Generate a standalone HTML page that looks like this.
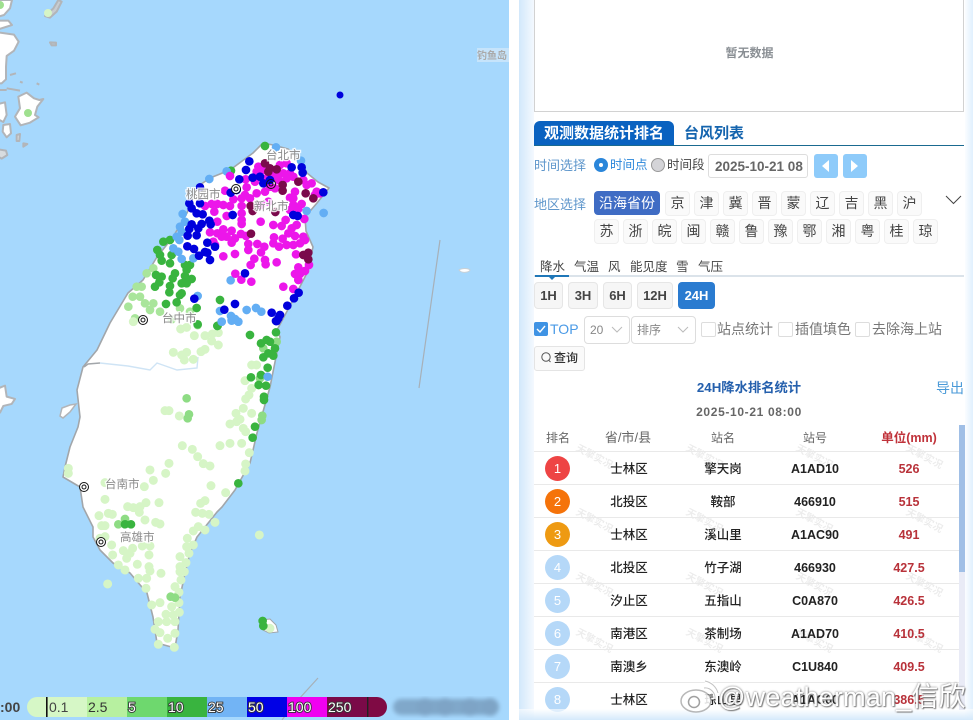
<!DOCTYPE html>
<html lang="zh"><head><meta charset="utf-8"><title>观测数据统计排名</title>
<style>
html,body{margin:0;padding:0;width:973px;height:720px;overflow:hidden;background:#fff}
body{position:relative;font-family:"Liberation Sans","Noto Sans CJK SC",sans-serif;color:#333}
.a{position:absolute;white-space:nowrap}
.c{text-align:center}
.chip{position:absolute;width:23px;height:23px;line-height:23px;text-align:center;font-size:14px;color:#444;background:#fafafa;border:1px solid #efefef;border-radius:4px}
.h{position:absolute;top:282px;height:25px;line-height:25px;text-align:center;font-size:13px;font-weight:700;color:#444;background:#f6f6f6;border:1px solid #e6e6e6;border-radius:4px}
.cb{position:absolute;top:322px;width:13px;height:13px;border:1px solid #ddd;border-radius:2px;background:#fff}
.lb{position:absolute;top:320px;font-size:14px;line-height:18px;color:#777;white-space:nowrap}
.sel{position:absolute;top:316px;height:26px;line-height:26px;border:1px solid #ddd;border-radius:4px;font-size:12px;color:#888;background:#fff;padding-left:5px;box-sizing:content-box}
.th{position:absolute;top:430px;font-size:12px;line-height:16px;color:#666;text-align:center;white-space:nowrap}
.line{position:absolute;left:534px;width:425px;height:1px;background:#e9e9e9}
.t{position:absolute;width:100px;line-height:18px;text-align:center;font-size:12.5px;color:#222;font-weight:500;white-space:nowrap;margin-top:1px}
.v{color:#b8323a;font-weight:700}
.n{font-weight:700}
.r{position:absolute;left:545px;width:25px;height:25px;line-height:25px;border-radius:50%;text-align:center;color:#fff;font-size:13px;background:#b5d8f8}
.w{position:absolute;font-size:10px;color:#000;opacity:.07;transform:rotate(28deg);white-space:nowrap;font-weight:700}
</style></head><body>

<svg class="a" style="left:0;top:0" width="509" height="720" viewBox="0 0 509 720">
<defs><filter id="bl"><feGaussianBlur stdDeviation="2.2"/></filter></defs>
<rect width="509" height="720" fill="#a6d8fd"/>
<!-- NW islands -->
<g transform="scale(.3333)" fill="#fff" stroke="#b2b5b9" stroke-width="6" stroke-linejoin="round">
<path d="M-5 0H36L30 25 12 45-5 50Z"/>
<path d="M-5 62H25L36 75-5 88Z"/>
<path d="M-5 97 42 104 56 125 42 152 20 168 18 200 18 238 5 250-5 250Z"/>
<path d="M55 290 80 278 102 295 118 300 130 297 112 320 105 345 116 352 90 368 62 376 45 350 60 325Z"/>
<path d="M-5 312 15 307 20 345 10 366-5 358Z"/>
<path d="M10 375 30 372 33 400 20 412 8 395Z"/>
<path d="M-5 448 18 452 22 465 5 476-5 470Z" fill="#d8dcdf"/>
<path d="M50 405 60 402 58 423 50 423Z" fill="#d8dcdf"/>
<path d="M150 127 168 128 168 136 155 136Z" fill="#b5c2cc"/>
<path d="M160 25 175 0 185 5 170 35 150 53 135 48Z" fill="#c8ccd0"/>
<path d="M-5 1165 15 1157 20 1190 45 1197 35 1212 10 1218 0 1238-5 1238Z"/>
<path d="M70 430 82 432 70 440Z" fill="#c8ccd0"/>
<path d="M30 225 48 220M110 250l8 4M60 245l8 3M20 265 60 272M0 270h20" fill="none"/>
</g>
<!-- Taiwan -->
<path d="M263 143 273 145 288 149 300 160 307 173 318 182 329 188 317 203 305 217 306 231 313 247 307 273 293 300 277 330 280 337 270 387 257 433 250 463 235 490 222 507 217 512 197 537 190 553 185 573 180 597 178 630 175 648 157 643 153 617 147 593 130 573 113 563 100 550 93 537 93 527 83 507 80 487 63 477 65 467 70 447 78 427 80 417 77 390 83 367 97 350 110 323 128 293 143 280 157 257 173 237 187 213 197 187 210 178 230 170 253 153Z" fill="#fff" stroke="#a2a6aa" stroke-width="1.6" stroke-linejoin="round"/>
<path d="M100 363 128 366 150 370 157 363 177 370 197 368 198 357" fill="none" stroke="#cfe4f5" stroke-width="1.4"/>
<path d="M84 367 88 364 100 363" fill="none" stroke="#a2a6aa" stroke-width="1.5"/>
<path d="M60 416 62 408 70 405 76 404 70 412 63 418Z" fill="#fff" stroke="#b2b5b9" stroke-width="1.5"/>
<path d="M459 270c3-2 9-2 11 0 0 2-8 4-11 0Z" fill="#fff" stroke="#c8d0d6"/>
<path d="M261 620l9-1 6 6 2 7-9 1-6-3Z" fill="#fff" stroke="#a2a6aa"/>
<path d="M440 240 419 388" stroke="#a7b0b8" stroke-width="1.2"/>
<path d="M318 678 298 700M288 712 282 720" stroke="#a7b0b8" stroke-width="1.2"/>
<rect x="477" y="48" width="32" height="14" fill="#c6e4fb"/>
<text x="477" y="59" font-size="10" font-weight="700" fill="#aaa">钓鱼岛</text>
<g fill="none" stroke-linecap="round" stroke-width="26">
<g transform="translate(130 130) scale(.3333)">
<path stroke="#a9e59b" d="M20 470h0M50 430h0M70 415h0M35 470h0M8 500h0M30 500h0M45 520h0M70 520h0M150 535h0M180 545h0M15 565h0M125 568h0M60 540h0M90 545h0M-5 530h0"/>
</g>
<g transform="translate(50 320) scale(.3333)">
<path stroke="#d6f5c6" stroke-width="27" d="M250 5h0M392 27h0M410 22h0M433 47h0M465 47h0M487 42h0M505 38h0M485 63h0M505 75h0M465 88h0M453 95h0M370 97h0M410 97h0M395 105h0M403 120h0M430 118h0M605 135h0M620 135h0M585 182h0M605 205h0M597 225h0M587 237h0M580 265h0M558 280h0M605 280h0M570 298h0M540 312h0M560 305h0M580 325h0M587 335h0M345 272h0M357 272h0M388 288h0M397 377h0M427 388h0M443 410h0M460 431h0M480 438h0M510 377h0M540 370h0M575 370h0M598 398h0M587 432h0M585 453h0M357 430h0M300 450h0M347 460h0M310 481h0M283 500h0M165 488h0M55 445h0M55 460h0M483 497h0M527 518h0M165 538h0M233 560h0M250 563h0M270 560h0M288 548h0M327 548h0M268 577h0M147 587h0M175 580h0M187 583h0M285 600h0M317 607h0M330 612h0M155 617h0M165 617h0M452 550h0M465 542h0M437 577h0M457 580h0M477 583h0M495 607h0M445 620h0M430 633h0M465 630h0M412 655h0M430 675h0M410 680h0M417 700h0M390 710h0M408 728h0M390 740h0M403 755h0M390 755h0M393 780h0M375 800h0M387 817h0M387 848h0M365 860h0M388 877h0M330 848h0M305 855h0M348 883h0M370 885h0M325 905h0M350 905h0M375 905h0M315 928h0M330 938h0M375 940h0M353 955h0M325 973h0M373 982h0M165 650h0M150 655h0M185 675h0M188 705h0M220 692h0M248 685h0M240 700h0M230 715h0M277 678h0M300 678h0M297 705h0M205 735h0M225 750h0M262 733h0M297 740h0M300 753h0M265 775h0M290 775h0M333 760h0M288 805h0M173 792h0M660 925h0M628 645h0"/>
<path stroke="#8edc84" d="M443 15h0M680 65h0M640 85h0M637 287h0M635 300h0M410 235h0M417 283h0M413 295h0M630 175h0M225 597h0M205 613h0M362 830h0M375 833h0"/>
<path stroke="#39b43f" d="M503 17h0M600 45h0M678 37h0M633 70h0M650 60h0M660 65h0M675 85h0M640 112h0M655 100h0M670 107h0M653 143h0M603 172h0M633 165h0M648 197h0M626 195h0M642 230h0M642 240h0M615 320h0M608 353h0M565 490h0M225 613h0M243 613h0M640 918h0M638 903h0"/>
<path stroke="#63aef4" d="M515 5h0M545 2h0M565 5h0M653 170h0"/>
<path stroke="#0000dc" d="M680 3h0"/>
</g>
<path stroke="#d6f5c6" stroke-width="8" d="M48 13h0"/>
<path stroke="#9fe08f" stroke-width="8" d="M28 113h0M0 5h0"/>
<path stroke="#0000dc" stroke-width="7" d="M340 95h0"/>
<g transform="translate(130 130) scale(.3333)">
<path stroke="#39b43f" d="M405 48h0M303 122h0M100 335h0M120 330h0M82 360h0M90 375h0M125 375h0M95 392h0M120 400h0M165 405h0M180 405h0M170 420h0M165 438h0M78 435h0M95 440h0M135 430h0M128 445h0M185 447h0M88 457h0M75 470h0M155 460h0M170 460h0M120 468h0M118 487h0M155 490h0M150 495h0M140 517h0M108 522h0M200 534h0M270 510h0M262 588h0M203 583h0"/>
<path stroke="#63aef4" d="M238 147h0M290 124h0M513 92h0M438 52h0M158 252h0M165 275h0M150 290h0M155 305h0M140 320h0M148 330h0M130 355h0M145 365h0M155 387h0M190 385h0M530 243h0M581 249h0M302 451h0M203 498h0M270 543h0M350 540h0M378 534h0M394 545h0M303 558h0M315 567h0M325 575h0M275 575h0M305 570h0"/>
<path stroke="#ec16ea" d="M300 138h0M385 110h0M380 125h0M450 105h0M470 100h0M440 135h0M460 130h0M480 130h0M445 150h0M470 145h0M490 140h0M410 145h0M420 170h0M405 185h0M435 175h0M347 148h0M375 155h0M350 172h0M285 182h0M345 195h0M380 190h0M360 205h0M335 205h0M310 208h0M300 228h0M280 225h0M262 222h0M245 222h0M225 228h0M253 245h0M290 258h0M262 275h0M335 228h0M335 250h0M335 270h0M335 282h0M392 275h0M430 285h0M455 288h0M467 270h0M500 285h0M485 295h0M475 310h0M495 318h0M520 320h0M525 330h0M510 340h0M490 345h0M470 345h0M447 350h0M430 340h0M432 322h0M458 326h0M240 307h0M280 298h0M262 310h0M275 320h0M290 320h0M305 302h0M315 325h0M305 338h0M333 312h0M348 318h0M355 342h0M382 342h0M403 350h0M393 367h0M373 386h0M405 390h0M407 403h0M362 405h0M440 397h0M280 379h0M315 372h0M355 360h0M250 335h0M255 345h0M498 373h0M537 405h0M505 412h0M525 423h0M495 432h0M510 432h0M505 450h0M316 431h0M334 449h0M364 455h0M460 470h0M490 477h0M400 120h0M420 130h0M490 205h0M515 222h0M490 225h0M505 237h0M523 267h0M545 160h0M520 150h0M530 165h0M560 185h0M570 190h0M495 185h0M480 203h0M415 215h0M393 225h0M480 240h0M555 195h0"/>
<path stroke="#0000dc" d="M358 94h0M348 120h0M328 148h0M368 143h0M390 140h0M400 160h0M420 150h0M485 112h0M515 112h0M518 128h0M320 180h0M302 188h0M210 172h0M178 220h0M210 220h0M185 235h0M200 250h0M218 253h0M238 272h0M242 283h0M215 282h0M185 283h0M178 297h0M205 295h0M173 317h0M200 316h0M232 338h0M255 350h0M172 349h0M192 357h0M207 377h0M225 366h0M232 368h0M240 390h0M308 255h0M490 255h0M503 258h0M580 187h0M345 430h0M193 506h0M315 522h0M283 539h0M425 548h0M450 555h0M445 565h0M438 573h0M472 527h0M492 505h0M506 488h0"/>
<path stroke="#7a0a4c" d="M405 100h0M420 115h0M440 118h0M415 125h0M458 165h0M458 182h0M505 155h0M527 190h0M550 205h0M362 228h0M368 243h0M436 246h0M363 311h0M520 375h0M535 368h0M535 388h0"/>
</g>
</g>
<!-- city markers -->
<g fill="#fff" stroke="#111" stroke-width="1">
<g><circle cx="143" cy="320" r="4.5"/><circle cx="143" cy="320" r="2"/></g>
<g><circle cx="84" cy="487" r="4.5"/><circle cx="84" cy="487" r="2"/></g>
<g><circle cx="101" cy="542" r="4.5"/><circle cx="101" cy="542" r="2"/></g>
<g><circle cx="236" cy="189" r="4.5"/><circle cx="236" cy="189" r="2"/></g>
<g><circle cx="271" cy="184" r="4.5" fill="none"/><circle cx="271" cy="184" r="2" fill="none"/></g>
</g>
<g font-size="11.5" fill="#8a8a8a" stroke="#fff" stroke-width="2.5" paint-order="stroke" stroke-opacity=".85">
<text x="266" y="159">台北市</text><text x="186" y="198">桃园市</text><text x="254" y="210">新北市</text><text x="162" y="322">台中市</text><text x="105" y="488">台南市</text><text x="120" y="541">高雄市</text>
</g>
<!-- legend -->
<path d="M37 697H87V717H37a10 10 0 0 1 0-20Z" fill="#d6f7c6"/>
<rect x="87" y="697" width="40" height="20" fill="#b7f0a0"/>
<rect x="127" y="697" width="40" height="20" fill="#6ed86e"/>
<rect x="167" y="697" width="40" height="20" fill="#39b43f"/>
<rect x="207" y="697" width="40" height="20" fill="#72b4f5"/>
<rect x="247" y="697" width="40" height="20" fill="#0000e6"/>
<rect x="287" y="697" width="40" height="20" fill="#f000f0"/>
<rect x="327" y="697" width="40" height="20" fill="#7a0a48"/>
<path d="M367 697H377a10 10 0 0 1 0 20H367Z" fill="#7f0a44"/>
<rect x="46" y="697" width="1.6" height="20" fill="#111"/>
<rect x="367" y="697" width="1.4" height="20" fill="#222"/>
<g filter="url(#bl)"><rect x="393" y="699" width="106" height="16" rx="8" fill="#80a8ca"/><circle cx="425" cy="707" r="9" fill="#7ea4c6"/><circle cx="445" cy="707" r="9" fill="#7ea4c6"/><circle cx="470" cy="707" r="9" fill="#7ea4c6"/><circle cx="490" cy="707" r="9" fill="#7ea4c6"/></g>
<g font-size="14" font-family="Liberation Sans">
<text x="49" y="712" fill="#444">0.1</text><text x="88" y="712" fill="#333">2.5</text>
<g fill="#fff" stroke="#333" stroke-width="1.8" paint-order="stroke"><text x="128" y="712">5</text><text x="168" y="712">10</text><text x="208" y="712">25</text><text x="248" y="712">50</text><text x="288" y="712">100</text><text x="328" y="712">250</text></g>
</g>
<text x="0" y="712" font-size="14" font-weight="700" font-family="Liberation Sans" fill="#444">:00</text>
</svg>

<!-- panel background -->
<div class="a" style="left:509px;top:0;width:464px;height:720px;background:#fff"></div>
<div class="a" style="left:519px;top:0;width:15px;height:720px;background:linear-gradient(90deg,#d2e8fb,#f4f9fe)"></div>
<div class="a" style="left:965px;top:0;width:8px;height:720px;background:linear-gradient(90deg,#fbfdff,#e0f0fe)"></div>

<div class="a" style="left:534px;top:-1px;width:428px;height:111px;border:1px solid #d2d2d2;background:#fff"></div>
<div class="a c" style="left:534px;top:45px;width:431px;font-size:12px;font-weight:700;color:#8a8f94;line-height:17px">暂无数据</div>

<!-- tabs -->
<div class="a c" style="left:534px;top:121px;width:140px;height:24px;line-height:25px;background:#0a62c0;border-radius:6px 6px 0 0;color:#fff;font-size:15px;font-weight:700">观测数据统计排名</div>
<div class="a" style="left:684px;top:124px;font-size:15px;line-height:20px;font-weight:700;color:#1464ae">台风列表</div>
<div class="a" style="left:534px;top:145px;width:430px;height:1px;background:#1a6a90"></div>

<!-- time row -->
<div class="a" style="left:534px;top:156px;font-size:13px;line-height:19px;color:#5e96cb">时间选择</div>
<div class="a" style="left:594px;top:158px;width:14px;height:14px;border-radius:50%;background:#2a86da"></div>
<div class="a" style="left:599px;top:163px;width:4px;height:4px;border-radius:50%;background:#fff"></div>
<div class="a" style="left:610px;top:156px;font-size:12.5px;line-height:19px;color:#2a86da">时间点</div>
<div class="a" style="left:651px;top:158px;width:12px;height:12px;border-radius:50%;background:#d4d4d8;border:1px solid #999"></div>
<div class="a" style="left:667px;top:156px;font-size:12.5px;line-height:19px;color:#444">时间段</div>
<div class="a" style="left:708px;top:154px;width:98px;height:22px;border:1px solid #ddd;border-radius:3px;line-height:23px;font-size:13.5px;font-weight:700;color:#666;text-indent:6px">2025-10-21 08</div>
<div class="a" style="left:814px;top:154px;width:24px;height:24px;background:#8ecbfa;border-radius:3px"></div>
<div class="a" style="left:843px;top:154px;width:24px;height:24px;background:#8ecbfa;border-radius:3px"></div>
<svg class="a" style="left:814px;top:154px" width="53" height="24"><path d="M15 6 8 12l7 6ZM37 6l7 6-7 6Z" fill="#fff"/></svg>

<!-- region -->
<div class="a" style="left:534px;top:195px;font-size:13px;line-height:19px;color:#5e96cb">地区选择</div>
<div class="a c" style="left:594px;top:191px;width:66px;height:24px;line-height:24px;background:#3f6cc4;border-radius:4px;color:#fff;font-size:14px">沿海省份</div>
<div class="chip" style="left:665px;top:191px">京</div><div class="chip" style="left:694px;top:191px">津</div><div class="chip" style="left:723px;top:191px">冀</div><div class="chip" style="left:752px;top:191px">晋</div><div class="chip" style="left:781px;top:191px">蒙</div><div class="chip" style="left:810px;top:191px">辽</div><div class="chip" style="left:839px;top:191px">吉</div><div class="chip" style="left:868px;top:191px">黑</div><div class="chip" style="left:897px;top:191px">沪</div>
<div class="chip" style="left:594px;top:219px">苏</div><div class="chip" style="left:623px;top:219px">浙</div><div class="chip" style="left:652px;top:219px">皖</div><div class="chip" style="left:681px;top:219px">闽</div><div class="chip" style="left:710px;top:219px">赣</div><div class="chip" style="left:739px;top:219px">鲁</div><div class="chip" style="left:768px;top:219px">豫</div><div class="chip" style="left:797px;top:219px">鄂</div><div class="chip" style="left:826px;top:219px">湘</div><div class="chip" style="left:855px;top:219px">粤</div><div class="chip" style="left:884px;top:219px">桂</div><div class="chip" style="left:913px;top:219px">琼</div>
<svg class="a" style="left:945px;top:195px" width="18" height="11"><path d="M1 1l7.5 7.5L16 1" fill="none" stroke="#444" stroke-width="1"/></svg>

<!-- elements -->
<div class="a" style="top:259px;left:540px;font-size:12.5px;line-height:17px;color:#444">降水</div>
<div class="a" style="top:259px;left:574px;font-size:12.5px;line-height:17px;color:#444">气温</div>
<div class="a" style="top:259px;left:608px;font-size:12.5px;line-height:17px;color:#444">风</div>
<div class="a" style="top:259px;left:630px;font-size:12.5px;line-height:17px;color:#444">能见度</div>
<div class="a" style="top:259px;left:676px;font-size:12.5px;line-height:17px;color:#444">雪</div>
<div class="a" style="top:259px;left:698px;font-size:12.5px;line-height:17px;color:#444">气压</div>
<div class="a" style="left:534px;top:275px;width:430px;height:2px;background:#dbe3ea"></div>
<div class="a" style="left:535px;top:275px;width:34px;height:2px;background:#1f77b8"></div>
<div class="a" style="left:549px;top:277px;border:3px solid transparent;border-top-color:#1f77b8;border-bottom:0"></div>

<div class="h" style="left:534px;width:27px">1H</div><div class="h" style="left:568px;width:28px">3H</div><div class="h" style="left:603px;width:27px">6H</div><div class="h" style="left:637px;width:34px">12H</div>
<div class="h" style="left:678px;width:37px;height:27px;line-height:27px;background:#2a7bd0;color:#fff;border:0">24H</div>

<!-- filters -->
<div class="a" style="left:534px;top:322px;width:14px;height:14px;background:#3f93e4;border-radius:2px"></div>
<svg class="a" style="left:534px;top:322px" width="14" height="14"><path d="M3 7l3 3 5-6" fill="none" stroke="#fff" stroke-width="1.4"/></svg>
<div class="a" style="left:550px;top:319px;font-size:14px;line-height:20px;color:#4a9ae6">TOP</div>
<div class="sel" style="left:584px;width:39px">20</div>
<div class="sel" style="left:631px;width:58px">排序</div>
<svg class="a" style="left:584px;top:316px" width="112" height="28"><path d="M28 11l5 5 5-5M94 11l5 5 5-5" fill="none" stroke="#bbb" stroke-width="1"/></svg>
<div class="cb" style="left:701px"></div><div class="lb" style="left:717px">站点统计</div>
<div class="cb" style="left:778px"></div><div class="lb" style="left:795px">插值填色</div>
<div class="cb" style="left:855px"></div><div class="lb" style="left:872px">去除海上站</div>
<div class="a" style="left:534px;top:346px;width:49px;height:23px;border:1px solid #e4e4e4;border-radius:3px;background:#fafafa"></div>
<svg class="a" style="left:540px;top:351px" width="12" height="14"><circle cx="6" cy="6" r="4.2" fill="none" stroke="#555"/><path d="M9 9.5l1.5 1.5" stroke="#555"/></svg>
<div class="a" style="left:554px;top:350px;font-size:12px;line-height:17px;font-weight:500;color:#333">查询</div>

<!-- table title -->
<div class="a c" style="left:649px;top:379px;width:200px;font-size:13.3px;line-height:18px;font-weight:700;color:#2560ad">24H降水排名统计</div>
<div class="a" style="left:936px;top:379px;font-size:14px;line-height:18px;color:#4a9ad8">导出</div>
<div class="a c" style="left:649px;top:404px;width:200px;font-size:12px;line-height:17px;font-weight:700;color:#666;letter-spacing:.65px">2025-10-21 08:00</div>

<!-- watermarks -->
<div class="w" style="left:575px;top:448px">天擎实况</div><div class="w" style="left:685px;top:448px">天擎实况</div><div class="w" style="left:795px;top:448px">天擎实况</div><div class="w" style="left:905px;top:448px">天擎实况</div>
<div class="w" style="left:575px;top:512px">天擎实况</div><div class="w" style="left:685px;top:512px">天擎实况</div><div class="w" style="left:795px;top:512px">天擎实况</div><div class="w" style="left:905px;top:512px">天擎实况</div>
<div class="w" style="left:575px;top:576px">天擎实况</div><div class="w" style="left:685px;top:576px">天擎实况</div><div class="w" style="left:795px;top:576px">天擎实况</div><div class="w" style="left:905px;top:576px">天擎实况</div>
<div class="w" style="left:575px;top:632px">天擎实况</div><div class="w" style="left:685px;top:632px">天擎实况</div><div class="w" style="left:795px;top:632px">天擎实况</div><div class="w" style="left:905px;top:632px">天擎实况</div>

<!-- table -->
<div class="th" style="left:534px;width:48px">排名</div>
<div class="th" style="left:578px;width:100px;font-size:13px">省/市/县</div>
<div class="th" style="left:673px;width:100px">站名</div>
<div class="th" style="left:765px;width:100px">站号</div>
<div class="th" style="left:859px;width:100px;color:#c0323a;font-weight:700;font-size:12.5px">单位(mm)</div>
<div class="line" style="top:451px"></div><div class="line" style="top:484px"></div><div class="line" style="top:517px"></div><div class="line" style="top:550px"></div><div class="line" style="top:583px"></div><div class="line" style="top:616px"></div><div class="line" style="top:649px"></div><div class="line" style="top:682px"></div>

<div class="r" style="top:456px;background:#ee4444">1</div><div class="t" style="left:579px;top:459px">士林区</div><div class="t" style="left:673px;top:459px">擎天岗</div><div class="t n" style="left:765px;top:459px">A1AD10</div><div class="t v" style="left:859px;top:459px">526</div>
<div class="r" style="top:489px;background:#f5730a">2</div><div class="t" style="left:579px;top:492px">北投区</div><div class="t" style="left:673px;top:492px">鞍部</div><div class="t n" style="left:765px;top:492px">466910</div><div class="t v" style="left:859px;top:492px">515</div>
<div class="r" style="top:522px;background:#ee9a12">3</div><div class="t" style="left:579px;top:525px">士林区</div><div class="t" style="left:673px;top:525px">溪山里</div><div class="t n" style="left:765px;top:525px">A1AC90</div><div class="t v" style="left:859px;top:525px">491</div>
<div class="r" style="top:555px">4</div><div class="t" style="left:579px;top:558px">北投区</div><div class="t" style="left:673px;top:558px">竹子湖</div><div class="t n" style="left:765px;top:558px">466930</div><div class="t v" style="left:859px;top:558px">427.5</div>
<div class="r" style="top:588px">5</div><div class="t" style="left:579px;top:591px">汐止区</div><div class="t" style="left:673px;top:591px">五指山</div><div class="t n" style="left:765px;top:591px">C0A870</div><div class="t v" style="left:859px;top:591px">426.5</div>
<div class="r" style="top:621px">6</div><div class="t" style="left:579px;top:624px">南港区</div><div class="t" style="left:673px;top:624px">茶制场</div><div class="t n" style="left:765px;top:624px">A1AD70</div><div class="t v" style="left:859px;top:624px">410.5</div>
<div class="r" style="top:654px">7</div><div class="t" style="left:579px;top:657px">南澳乡</div><div class="t" style="left:673px;top:657px">东澳岭</div><div class="t n" style="left:765px;top:657px">C1U840</div><div class="t v" style="left:859px;top:657px">409.5</div>
<div class="r" style="top:687px">8</div><div class="t" style="left:579px;top:690px">士林区</div><div class="t" style="left:673px;top:690px">琼山里</div><div class="t n" style="left:765px;top:690px">A1AC60</div><div class="t v" style="left:859px;top:690px">386.5</div>
<div class="a" style="left:519px;top:709px;width:454px;height:11px;background:linear-gradient(180deg,rgba(255,255,255,.6),#d4e9fb)"></div>

<!-- scrollbar -->
<div class="a" style="left:959px;top:425px;width:6px;height:285px;background:#e9ebf6"></div>
<div class="a" style="left:959px;top:425px;width:6px;height:147px;background:#a0bfe6"></div>

<!-- weibo watermark -->
<svg class="a" style="left:678px;top:678px" width="42" height="36"><g fill="none"><ellipse cx="18" cy="23" rx="15" ry="11" fill="#fff" fill-opacity=".85" stroke="#888" stroke-opacity=".6" stroke-width="1.5"/><circle cx="16" cy="24" r="5.5" stroke="#777" stroke-opacity=".7" stroke-width="1.5"/><path d="M26 10a10 10 0 0 1 11 11M27 3a17 17 0 0 1 13 12" stroke="#fff" stroke-width="3.5"/><path d="M26 10a10 10 0 0 1 11 11M27 3a17 17 0 0 1 13 12" stroke="#888" stroke-opacity=".5" stroke-width="1"/></g></svg>
<div class="a" style="left:718px;top:679px;font-size:27px;line-height:36px;color:#fff;opacity:.92;text-shadow:0 0 2px #666,1px 1px 1px #777;letter-spacing:.2px">@weatherman_信欣</div>
</body></html>
